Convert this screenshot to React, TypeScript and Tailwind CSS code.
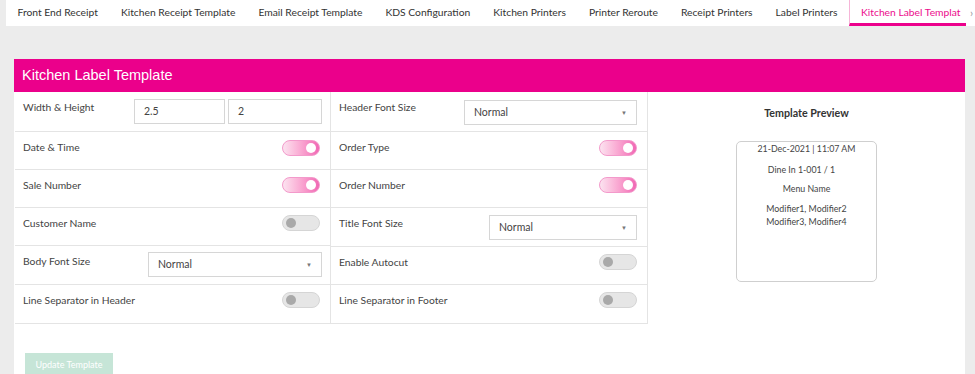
import React from 'react';

const tabs = [
  'Front End Receipt',
  'Kitchen Receipt Template',
  'Email Receipt Template',
  'KDS Configuration',
  'Kitchen Printers',
  'Printer Reroute',
  'Receipt Printers',
  'Label Printers',
];

const Toggle: React.FC<{ on?: boolean }> = ({ on }) =>
  on ? (
    <div className="w-[38px] h-[16px] rounded-full bg-gradient-to-r from-[#fbe3f0] to-[#f067b4] border border-[#f39acb] flex items-center justify-end pr-[3px]">
      <div className="w-[10px] h-[10px] rounded-full bg-white" />
    </div>
  ) : (
    <div className="w-[38px] h-[16px] rounded-full bg-[#e6e6e6] border border-[#d5d5d5] flex items-center pl-[3px]">
      <div className="w-[10px] h-[10px] rounded-full bg-[#a9a9a9]" />
    </div>
  );

const Select: React.FC<{ w: string }> = ({ w }) => (
  <div className={`${w} h-[25px] border border-[#d6d6d6] bg-white flex items-center justify-between pl-[9px] pr-[9px] text-[10.5px] text-[#444]`}>
    <span className="mt-[1px]">Normal</span>
    <span className="text-[6px] text-[#777]">▼</span>
  </div>
);

const Row: React.FC<{ label: string; children?: React.ReactNode; h?: string; last?: boolean }> = ({
  label,
  children,
  h = 'h-[38px]',
  last,
}) => (
  <div className={`${h} flex items-start justify-between pl-[8px] pr-[10px] ${last ? '' : 'border-b border-[#e4e4e4]'}`}>
    <span className="text-[10.3px] text-[#444] pt-[8px]">{label}</span>
    {children}
  </div>
);

export default function App() {
  return (
    <div className="w-[975px] h-[374px] overflow-hidden bg-[#ececec] font-['Lato','Noto_Sans',sans-serif]">
      {/* Tabs */}
      <div className="ml-[6px] h-[26px] bg-white flex items-stretch text-[10.3px] text-[#333]">
        {tabs.map((t) => (
          <div key={t} className="px-[11.5px] flex items-center whitespace-nowrap">
            {t}
          </div>
        ))}
        <div className="w-[117px] pl-[11px] flex items-center whitespace-nowrap overflow-hidden text-[#ec0c8c] border-l border-[#f6b5d8] border-b-[3px] border-b-[#ec008c] pt-[3px]">
          Kitchen Label Templat
        </div>
        <div className="pl-[4px] flex items-center text-[#999] text-[11px]">›</div>
      </div>

      {/* Panel */}
      <div className="mt-[33px] ml-[14px] w-[951px]">
        <div className="h-[33px] bg-[#eb008b] flex items-center pl-[8px] text-white text-[14.5px] font-['Liberation_Sans',Arial,sans-serif]">
          Kitchen Label Template
        </div>
        <div className="bg-white h-[300px] pl-[1px]">
          <div className="flex">
            <div className="flex border-r border-b border-[#e4e4e4]">
              {/* Left column */}
              <div className="w-[316px] border-r border-[#e4e4e4]">
                <Row label="Width & Height" h="h-[40px]">
                  <div className="flex gap-[3px] mt-[7px] mr-[-2px]">
                    <div className="w-[91px] h-[25px] border border-[#d6d6d6] pl-[9px] flex items-center text-[10.5px] text-[#444]">2.5</div>
                    <div className="w-[94px] h-[25px] border border-[#d6d6d6] pl-[9px] flex items-center text-[10.5px] text-[#444]">2</div>
                  </div>
                </Row>
                <Row label="Date & Time">
                  <div className="mt-[8px]"><Toggle on /></div>
                </Row>
                <Row label="Sale Number">
                  <div className="mt-[7px]"><Toggle on /></div>
                </Row>
                <Row label="Customer Name">
                  <div className="mt-[7px]"><Toggle /></div>
                </Row>
                <Row label="Body Font Size" h="h-[39px]">
                  <div className="mt-[6px] mr-[-2px]"><Select w="w-[174px]" /></div>
                </Row>
                <Row label="Line Separator in Header" last>
                  <div className="mt-[7px]"><Toggle /></div>
                </Row>
              </div>
              {/* Right column */}
              <div className="w-[316px]">
                <Row label="Header Font Size" h="h-[40px]">
                  <div className="mt-[8px]"><Select w="w-[173px]" /></div>
                </Row>
                <Row label="Order Type">
                  <div className="mt-[8px]"><Toggle on /></div>
                </Row>
                <Row label="Order Number">
                  <div className="mt-[7px]"><Toggle on /></div>
                </Row>
                <Row label="Title Font Size" h="h-[39px]">
                  <div className="mt-[7px]"><Select w="w-[148px]" /></div>
                </Row>
                <Row label="Enable Autocut">
                  <div className="mt-[7px]"><Toggle /></div>
                </Row>
                <Row label="Line Separator in Footer" last>
                  <div className="mt-[7px]"><Toggle /></div>
                </Row>
              </div>
            </div>

            {/* Preview */}
            <div className="flex-1 flex flex-col items-center">
              <div className="mt-[13px] text-[10.7px] font-bold text-[#333]">Template Preview</div>
              <div className="mt-[20px] w-[141px] h-[141px] border border-[#cfcfcf] rounded-[5px] flex flex-col items-center text-[8.8px] text-[#444]">
                <div>21-Dec-2021 | 11:07 AM</div>
                <div className="mt-[8px] mr-[10px]">Dine In 1-001 / 1</div>
                <div className="mt-[6px]">Menu Name</div>
                <div className="mt-[6px] leading-[13px] text-center">
                  Modifier1, Modifier2
                  <br />
                  Modifier3, Modifier4
                </div>
              </div>
            </div>
          </div>

          <div className="mt-[29px] ml-[10px] w-[88px] h-[24px] bg-[#c6e5d7] text-white text-[9px] flex items-center justify-center">
            Update Template
          </div>
        </div>
      </div>
    </div>
  );
}
